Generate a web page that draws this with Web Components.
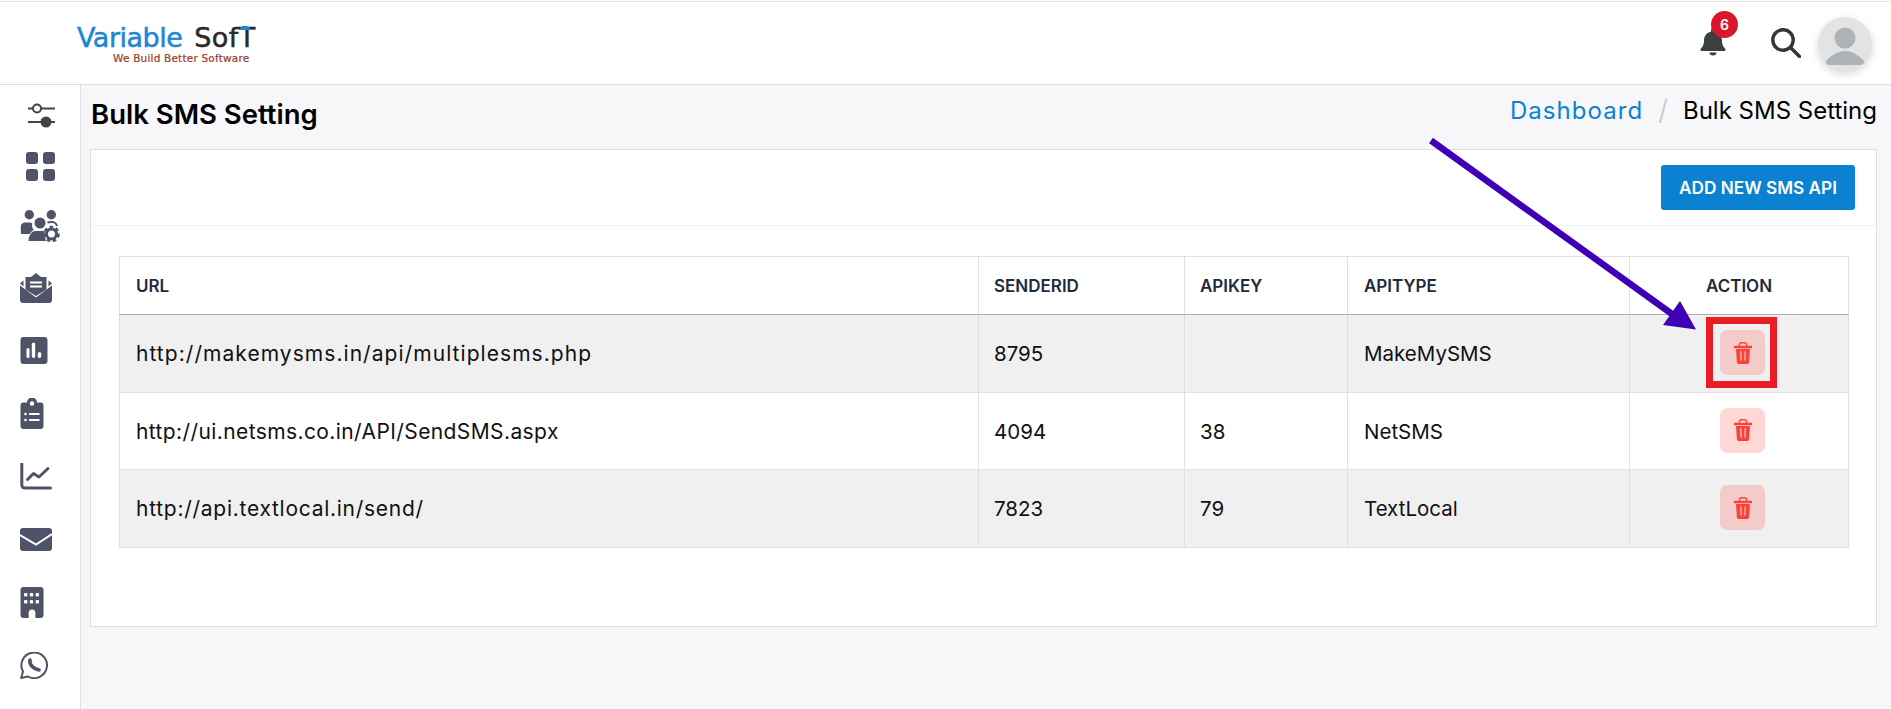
<!DOCTYPE html>
<html>
<head>
<meta charset="utf-8">
<title>Bulk SMS Setting</title>
<style>
  html,body{margin:0;height:100%;overflow:hidden;background:#f7f7fa;font-family:Inter,"Liberation Sans",sans-serif;color:#000}
</style>
</head>
<body>
<app-shell>
  <app-header slot="header"></app-header>
  <app-sidebar slot="side"></app-sidebar>
  <page-head title-text="Bulk SMS Setting"></page-head>
  <sms-card>
    <sms-table></sms-table>
  </sms-card>
  <note-arrow></note-arrow>
</app-shell>

<script>
'use strict';

// small helper so each element is not repeating the same three lines
function shadow(el, html){
  const t = document.createElement('template');
  t.innerHTML = html;
  el.attachShadow({mode:'open'}).appendChild(t.content.cloneNode(true));
}

customElements.define('app-shell', class extends HTMLElement {
  constructor(){
    super();
    shadow(this, `
<style>
  :host{display:grid;grid-template-columns:81px 1fr;grid-template-rows:85px 1fr;height:709px;position:relative}
  .top{grid-column:1 / 3}
  main{padding:0 14px 0 9px;min-width:0}
</style>
<div class="top"><slot name="header"></slot></div>
<slot name="side"></slot>
<main><slot></slot></main>`);
  }
});

customElements.define('app-header', class extends HTMLElement {
  constructor(){
    super();
    shadow(this, `
<style>
  :host{display:flex;align-items:center;justify-content:space-between;height:85px;box-sizing:border-box;background:#fff;border-top:1px solid #fff;box-shadow:inset 0 1px #e3e3e6;border-bottom:1px solid #dfdfe3;padding:0 19px 0 77px}
  .logo{position:relative;width:180px;margin-top:4px}
  .name{font:400 27px/26px "DejaVu Sans",sans-serif;letter-spacing:-.5px;color:#1c86d2;white-space:nowrap;-webkit-text-stroke:.5px currentColor}
  .name b{font-weight:400;color:#2a2a2a;margin-left:12px;letter-spacing:.4px}
  .tag{font:400 10.500px/12px "DejaVu Sans",sans-serif;color:#9b3a2a;margin:1px 0 0 36px;white-space:nowrap;letter-spacing:.2px;-webkit-text-stroke:.2px currentColor}
  .umb{position:absolute;left:163px;top:1px;width:10px;height:4px;background:#1c86d2;border-radius:5px 5px 0 0}
  .right{display:flex;align-items:center}
  .bell{position:relative;display:block;width:26px;height:28px;margin-right:45px;margin-top:-2px}
  .badge{position:absolute;left:11px;top:-17px;width:27px;height:27px;border-radius:50%;background:#d9172c;color:#fff;font:600 14px/27px Inter,sans-serif;text-align:center}
  .search{display:block;margin-right:17px;margin-top:1px}
  .avatar{width:54px;height:54px;border-radius:50%;background:#e1e3e5;box-shadow:0 3px 8px rgba(0,0,0,.16);display:block;margin-top:2px}
  svg{display:block}
</style>
<div class="logo">
  <div class="name">Variable<b>SofT</b></div>
  <div class="tag">We Build Better Software</div>
  <span class="umb"></span>
</div>
<div class="right">
  <div class="bell">
    <svg width="26" height="28" viewBox="0 0 26 28" fill="#3a3f44"><path d="M13 0a2 2 0 0 1 2 2v1.800c4.500.8 7 4.600 7 8.700 0 4.500 1.500 6.500 3.200 8.200.8.800.3 2.300-1 2.300H1.800c-1.300 0-1.800-1.500-1-2.300C2.500 19 4 17 4 12.500c0-4.100 2.500-7.900 7-8.700V2a2 2 0 0 1 2-2z"/><path d="M9.500 24.500h7a3.500 3 0 0 1-7 0z"/></svg>
    <span class="badge">6</span>
  </div>
  <svg class="search" width="30" height="30" viewBox="0 0 30 30" fill="none" stroke="#33373b" stroke-width="3.4" stroke-linecap="round"><circle cx="12" cy="12" r="10.200"/><path d="M19.500 19.500l9 9"/></svg>
  <svg class="avatar" viewBox="0 0 54 54"><circle cx="27" cy="21" r="10.500" fill="#afb3b6"/><path d="M6 48c3-7 12-14 21-14s18 7 21 14z" fill="#afb3b6"/></svg>
</div>`);
  }
});

const INK = '#4f5368';
const SIDE_ICONS = [
  // [left, height of the row, width, height, inner svg]
  [28, 43, 27, 25, `<g stroke="#444" stroke-width="2" fill="none"><path d="M0 5.500h5M13 5.500h14M0 19h27"/><circle cx="9" cy="5.500" r="4"/></g><circle cx="18" cy="19" r="5.500" fill="#444"/>`],
  [26, 58, 29, 29, `<g fill="${INK}"><rect width="12" height="12" rx="3"/><rect x="17" width="12" height="12" rx="3"/><rect y="17" width="12" height="12" rx="3"/><rect x="17" y="17" width="12" height="12" rx="3"/></g>`],
  [20, 62, 40, 32, `<g fill="${INK}"><circle cx="9.300" cy="4.700" r="4.700"/><circle cx="31.300" cy="4.700" r="4.700"/><circle cx="20" cy="13" r="5.500"/><path d="M.7 16.500c0-2 2-4 4.500-4h4.500c1 0 2 .4 2.700 1-1 3 0 5 1.500 6.500-2 1-3.500 2.500-4 4H1z"/><path d="M8.500 31c0-5 3-10 7-10h7c1.500 0 2.500.4 3.500 1-1 3-1 6 0 9z"/></g><path d="M27.500 12.500c1-.5 2-.5 3-.5h2c2 0 4 2 4.500 4" fill="none" stroke="${INK}" stroke-width="2"/><circle cx="31.500" cy="24" r="7" fill="#fff"/><circle cx="31.500" cy="24" r="5" fill="none" stroke="${INK}" stroke-width="3"/><circle cx="31.500" cy="24" r="6.800" fill="none" stroke="${INK}" stroke-width="3" stroke-dasharray="3.300 2.700"/>`],
  [20, 62, 32, 32, `<g fill="${INK}"><path d="M0 13.500L16 25.500 32 13.500V28a3 3 0 0 1-3 3H3a3 3 0 0 1-3-3z"/><path d="M5.500 5H11L16 1l5 4h5.500v12.500L16 24 5.500 17.500z"/><path d="M0 11.500L3.500 8.500v6zM32 11.500L28.500 8.500v6z"/></g><path d="M10 10.500h12M10 14.500h12" stroke="#fff" stroke-width="1.800"/>`],
  [20, 63, 28, 27, `<rect x=".5" width="27" height="27" rx="3" fill="${INK}"/><g fill="#fff"><rect x="6.500" y="11" width="3" height="10" rx="1.500"/><rect x="11.800" y="5.500" width="3.400" height="15.500" rx="1.700"/><rect x="17.800" y="15" width="3.400" height="6" rx="1.700"/></g>`],
  [20, 63, 24, 31, `<path d="M3.500 4.500H7a5 5 0 0 1 10 0h3.500a3 3 0 0 1 3 3V28a3 3 0 0 1-3 3h-17a3 3 0 0 1-3-3V7.500a3 3 0 0 1 3-3z" fill="${INK}"/><g fill="#fff"><circle cx="12" cy="5.500" r="2.200"/><circle cx="5.500" cy="16" r="1.300"/><circle cx="5.500" cy="22" r="1.300"/><rect x="9" y="15" width="10.500" height="2"/><rect x="9" y="21" width="10.500" height="2"/></g>`],
  [20, 63, 32, 27, `<g fill="none" stroke="${INK}" stroke-width="3" stroke-linecap="round" stroke-linejoin="round"><path d="M1.800 1v21a3 3 0 0 0 3 3H30.500"/><path d="M7.500 16.500L13.500 10.500 19 14 28 5.500"/></g>`],
  [20, 63, 32, 23, `<rect width="32" height="23" rx="3" fill="${INK}"/><path d="M0 7L16 16.500 32 6" fill="none" stroke="#fff" stroke-width="2"/>`],
  [20, 63, 24, 31, `<path d="M3 0h18a3 3 0 0 1 3 3v25a3 3 0 0 1-3 3h-5.500v-5a3 3 0 0 0-7 0v5H3a3 3 0 0 1-3-3V3a3 3 0 0 1 3-3z" fill="${INK}" transform="translate(.5 0) scale(.96 1)"/><g fill="#fff"><rect x="4" y="6" width="3.400" height="3.400" rx="1"/><rect x="9.800" y="6" width="3.400" height="3.400" rx="1"/><rect x="15.600" y="6" width="3.400" height="3.400" rx="1"/><rect x="4" y="13" width="3.400" height="3.400" rx="1"/><rect x="9.800" y="13" width="3.400" height="3.400" rx="1"/><rect x="15.600" y="13" width="3.400" height="3.400" rx="1"/></g>`],
  [20, 63, 28, 27, `<path d="M1.200 26l1.800-6.500A12.800 12.800 0 1 1 8 24.500z" fill="none" stroke="${INK}" stroke-width="2" stroke-linejoin="round"/><path d="M10 8c-.8 4.500 3 9 9 10" fill="none" stroke="${INK}" stroke-width="3.600" stroke-linecap="round"/>`]
];

customElements.define('app-sidebar', class extends HTMLElement {
  constructor(){
    super();
    let rows = '';
    for (const [left, h, w, ih, body] of SIDE_ICONS){
      rows += `<div class="row" style="height:${h}px;padding-left:${left}px"><svg width="${w}" height="${ih}" viewBox="0 0 ${w} ${ih}">${body}</svg></div>`;
    }
    shadow(this, `
<style>
  :host{display:block;background:#fff;border-right:1px solid #dfdfe3;padding-top:9px;box-sizing:border-box}
  .row{display:flex;align-items:center;box-sizing:border-box}
  svg{display:block}
</style>${rows}`);
  }
});

customElements.define('page-head', class extends HTMLElement {
  constructor(){
    super();
    const t = this.getAttribute('title-text');
    shadow(this, `
<style>
  :host{display:flex;justify-content:space-between;height:64px;font-family:Inter,sans-serif}
  h1{margin:12px 0 0 1px;font-size:27.500px;line-height:34px;font-weight:600}
  nav{display:flex;align-items:center;height:50px;font-size:24px}
  a{color:#0a81d1;letter-spacing:1.050px}
  i{font-style:normal;color:#c3c8cd;margin:0 15px;font-size:28px;font-weight:300}
</style>
<h1>${t}</h1>
<nav><a>Dashboard</a><i>/</i><span>${t}</span></nav>`);
  }
});

customElements.define('sms-card', class extends HTMLElement {
  constructor(){
    super();
    shadow(this, `
<style>
  :host{display:block;background:#fff;border:1px solid #dfdfe3;height:478px;box-sizing:border-box}
  .bar{display:flex;justify-content:flex-end;align-items:center;height:76px;box-sizing:border-box;padding:0 21px 0 0;border-bottom:1px solid #f1f1f3}
  button{height:45px;width:194px;border:0;border-radius:3px;background:#0a81d1;color:#fff;font:600 17.200px Inter,sans-serif;padding:0}
  .body{padding:30px 28px}
</style>
<div class="bar"><button>ADD NEW SMS API</button></div>
<div class="body"><slot></slot></div>`);
  }
});

const TRASH = `<svg width="18" height="22" viewBox="0 0 18 22"><path d="M5.500 4V2.500C5.500 1.300 6.500.7 7.500.7h3c1 0 2 .6 2 1.800V4" fill="none" stroke="#fb4238" stroke-width="1.400"/><path fill="#fb4238" fill-rule="evenodd" d="M0 3.800h18v2.400H0zM2 7h14l-.9 13.200A1.800 1.800 0 0 1 13.300 22H4.700a1.800 1.800 0 0 1-1.800-1.800zM6.200 9.300l.3 9.200h1.200L7.400 9.300zM10.600 9.300l-.3 9.200h1.200l.3-9.200z"/></svg>`;
// the last number is the tracking of the url cell, Inter runs narrower than the original face
const ROWS = [
  ['http://makemysms.in/api/multiplesms.php','8795','','MakeMySMS',1.05],
  ['http://ui.netsms.co.in/API/SendSMS.aspx','4094','38','NetSMS',.4],
  ['http://api.textlocal.in/send/','7823','79','TextLocal',.73]
];

customElements.define('sms-table', class extends HTMLElement {
  constructor(){
    super();
    const body = ROWS.map(r => `<tr><td class="url" style="letter-spacing:${r[4]}px">${r[0]}</td><td>${r[1]}</td><td>${r[2]}</td><td class="type">${r[3]}</td><td class="act"><button>${TRASH}</button></td></tr>`).join('');
    shadow(this, `
<style>
  :host{display:block;font-family:Inter,sans-serif}
  table{border-collapse:collapse;table-layout:fixed;width:1729px;color:#111}
  th,td{border:1px solid #dfe1e6;padding:0 0 0 15px;text-align:left;box-sizing:border-box}
  th{height:58px;font-size:17px;font-weight:600;color:#1f2a3c;border-bottom:1px solid #adb0b3}
  td{font-size:20.500px}
  th:first-child,.url,th.type,.type{padding-left:16px}
  .url{font-size:21px}
  tr:nth-child(1) td,tr:nth-child(3) td{height:78px}
  tr:nth-child(2) td{height:77px}
  tbody tr:nth-child(odd){background:#f0f0f1}
  th.c{text-align:center;padding:0}
  .act{padding:0}
  button{display:flex;width:45px;height:45px;border:0;border-radius:7px;background:rgba(255,59,48,.2);padding:0;margin:0 0 2px 90px;align-items:center;justify-content:center}
  svg{display:block}
</style>
<table>
  <colgroup><col style="width:859px"><col style="width:206px"><col style="width:163px"><col style="width:282px"><col style="width:219px"></colgroup>
  <thead><tr><th>URL</th><th>SENDERID</th><th>APIKEY</th><th class="type">APITYPE</th><th class="c">ACTION</th></tr></thead>
  <tbody>${body}</tbody>
</table>`);
  }
});

// the hand drawn mark-up on top of the screenshot
customElements.define('note-arrow', class extends HTMLElement {
  constructor(){
    super();
    shadow(this, `
<style>
  :host{position:absolute;left:0;top:0;width:1891px;height:709px;pointer-events:none}
  svg{display:block}
</style>
<svg width="1891" height="709" viewBox="0 0 1891 709">
  <path d="M1431 140.500L1672 314" stroke="#3f00b5" stroke-width="6.500" fill="none"/>
  <polygon points="1696,329.500 1663,325 1680,301" fill="#3f00b5"/>
  <rect x="1709.500" y="320.500" width="64" height="64" fill="none" stroke="#ea1c24" stroke-width="7"/>
</svg>`);
  }
});
</script>
</body>
</html>
